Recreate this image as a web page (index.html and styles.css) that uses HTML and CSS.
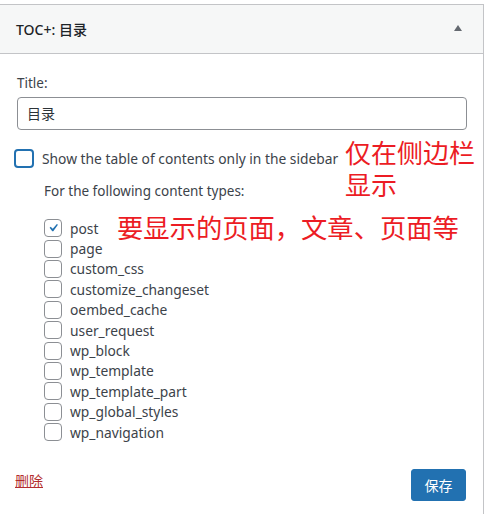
FILE: index.html
```html
<!DOCTYPE html>
<html>
<head>
<meta charset="utf-8">
<link rel="stylesheet" href="styles.css">
</head>
<body>
<div class="widget">
  <div class="widget-head">
    <span class="widget-title">TOC+: 目录</span>
    <span class="toggle"></span>
  </div>
  <div class="widget-body">
    <label class="field-label">Title:</label>
    <div class="text-input">目录</div>
    <div class="sidebar-row">
      <span class="cb cb-focus"></span>
      <span class="sidebar-text">Show the table of contents only in the sidebar</span>
    </div>
    <div class="types">
      <div class="types-label">For the following content types:</div>
      <ul class="type-list">
        <li><span class="cb checked"><svg viewBox="0 0 20 20" width="18" height="18"><path d="M14.83 4.89l1.34.94-5.81 8.38H9.02L5.78 9.67l1.34-1.25 2.57 2.4z" fill="#2271b1"/></svg></span>post</li>
        <li><span class="cb"></span>page</li>
        <li><span class="cb"></span>custom_css</li>
        <li><span class="cb"></span>customize_changeset</li>
        <li><span class="cb"></span>oembed_cache</li>
        <li><span class="cb"></span>user_request</li>
        <li><span class="cb"></span>wp_block</li>
        <li><span class="cb"></span>wp_template</li>
        <li><span class="cb"></span>wp_template_part</li>
        <li><span class="cb"></span>wp_global_styles</li>
        <li><span class="cb"></span>wp_navigation</li>
      </ul>
    </div>
    <div class="actions">
      <a class="delete" href="#">删除</a>
      <button class="save">保存</button>
    </div>
    <div class="note note-sidebar">仅在侧边栏</div>
    <div class="note note-sidebar2">显示</div>
    <div class="note note-types">要显示的页面，文章、页面等</div>
  </div>
</div>
</body>
</html>
```

FILE: styles.css
```css
* { box-sizing: border-box; }
html, body { margin: 0; padding: 0; background: #fff; }
body {
  font-family: "Noto Sans", "Noto Sans CJK SC", sans-serif;
  font-size: 13.5px;
  color: #3c434a;
}
.widget {
  margin: 4px 1px 0 -1px;
  border: 1px solid #c3c4c7;
  background: #fff;
  height: 520px;
}
.widget-head {
  height: 49px;
  background: #f6f7f7;
  border-bottom: 1px solid #c3c4c7;
  display: flex;
  align-items: center;
  justify-content: space-between;
  padding: 0 21px 0 16px;
}
.widget-title {
  font-size: 14px;
  font-weight: 500;
  color: #1d2327;
  margin-top: -1px;
}
.toggle {
  width: 0; height: 0;
  border-left: 4.5px solid transparent;
  border-right: 4.5px solid transparent;
  border-bottom: 6px solid #646970;
  margin-top: -2px;
}
.widget-body {
  position: relative;
  padding: 20px 16px 0 17px;
}
.field-label {
  display: block;
  line-height: 18px;
  color: #3c434a;
}
.text-input {
  margin-top: 5px;
  width: 450px;
  height: 33px;
  border: 1px solid #8c8f94;
  border-radius: 4px;
  padding: 0 9px;
  line-height: 31px;
  font-size: 14px;
  color: #2c3338;
}
.sidebar-row {
  display: flex;
  align-items: center;
  margin-top: 19px;
  margin-left: -3px;
  height: 18px;
}
.cb {
  display: inline-flex;
  align-items: center;
  justify-content: center;
  width: 18px;
  height: 18px;
  border: 1px solid #8c8f94;
  border-radius: 4px;
  background: #fff;
  flex: none;
}
.cb-focus {
  width: 20px;
  height: 19px;
  border: 2px solid #2271b1;
  border-radius: 4px;
  margin-right: 8px;
}
.sidebar-text { font-size: 13.8px; }
.types {
  margin-left: 27px;
  margin-top: 15px;
}
.types-label { line-height: 18px; }
.type-list {
  list-style: none;
  margin: 18px 0 0;
  padding: 0;
}
.type-list li {
  display: flex;
  align-items: center;
  height: 20.4px;
  gap: 8px;
  font-size: 13.8px;
}
.cb.checked svg { display: block; }
.actions {
  display: flex;
  justify-content: space-between;
  align-items: flex-start;
  margin-top: 27px;
  margin-left: -2px;
  padding-right: 1px;
}
.delete {
  color: #b32d2e;
  text-decoration: underline;
  font-size: 14px;
  line-height: 18px;
  margin-top: 2px;
  font-family: "Noto Sans CJK SC", sans-serif;
}
.save {
  width: 55px;
  height: 32px;
  background: #2271b1;
  border: 1px solid #2271b1;
  border-radius: 3px;
  color: #fff;
  font-size: 14px;
  font-family: "Noto Sans CJK SC", sans-serif;
  padding: 0;
}
.note {
  position: absolute;
  color: #ec1c24;
  font-family: "Noto Sans CJK SC", sans-serif;
  font-size: 26px;
  line-height: 27px;
}
.note-sidebar { left: 345px; top: 84px; }
.note-sidebar2 { left: 345px; top: 116px; }
.note-types { left: 117px; top: 159px; font-size: 26.3px; }
```
